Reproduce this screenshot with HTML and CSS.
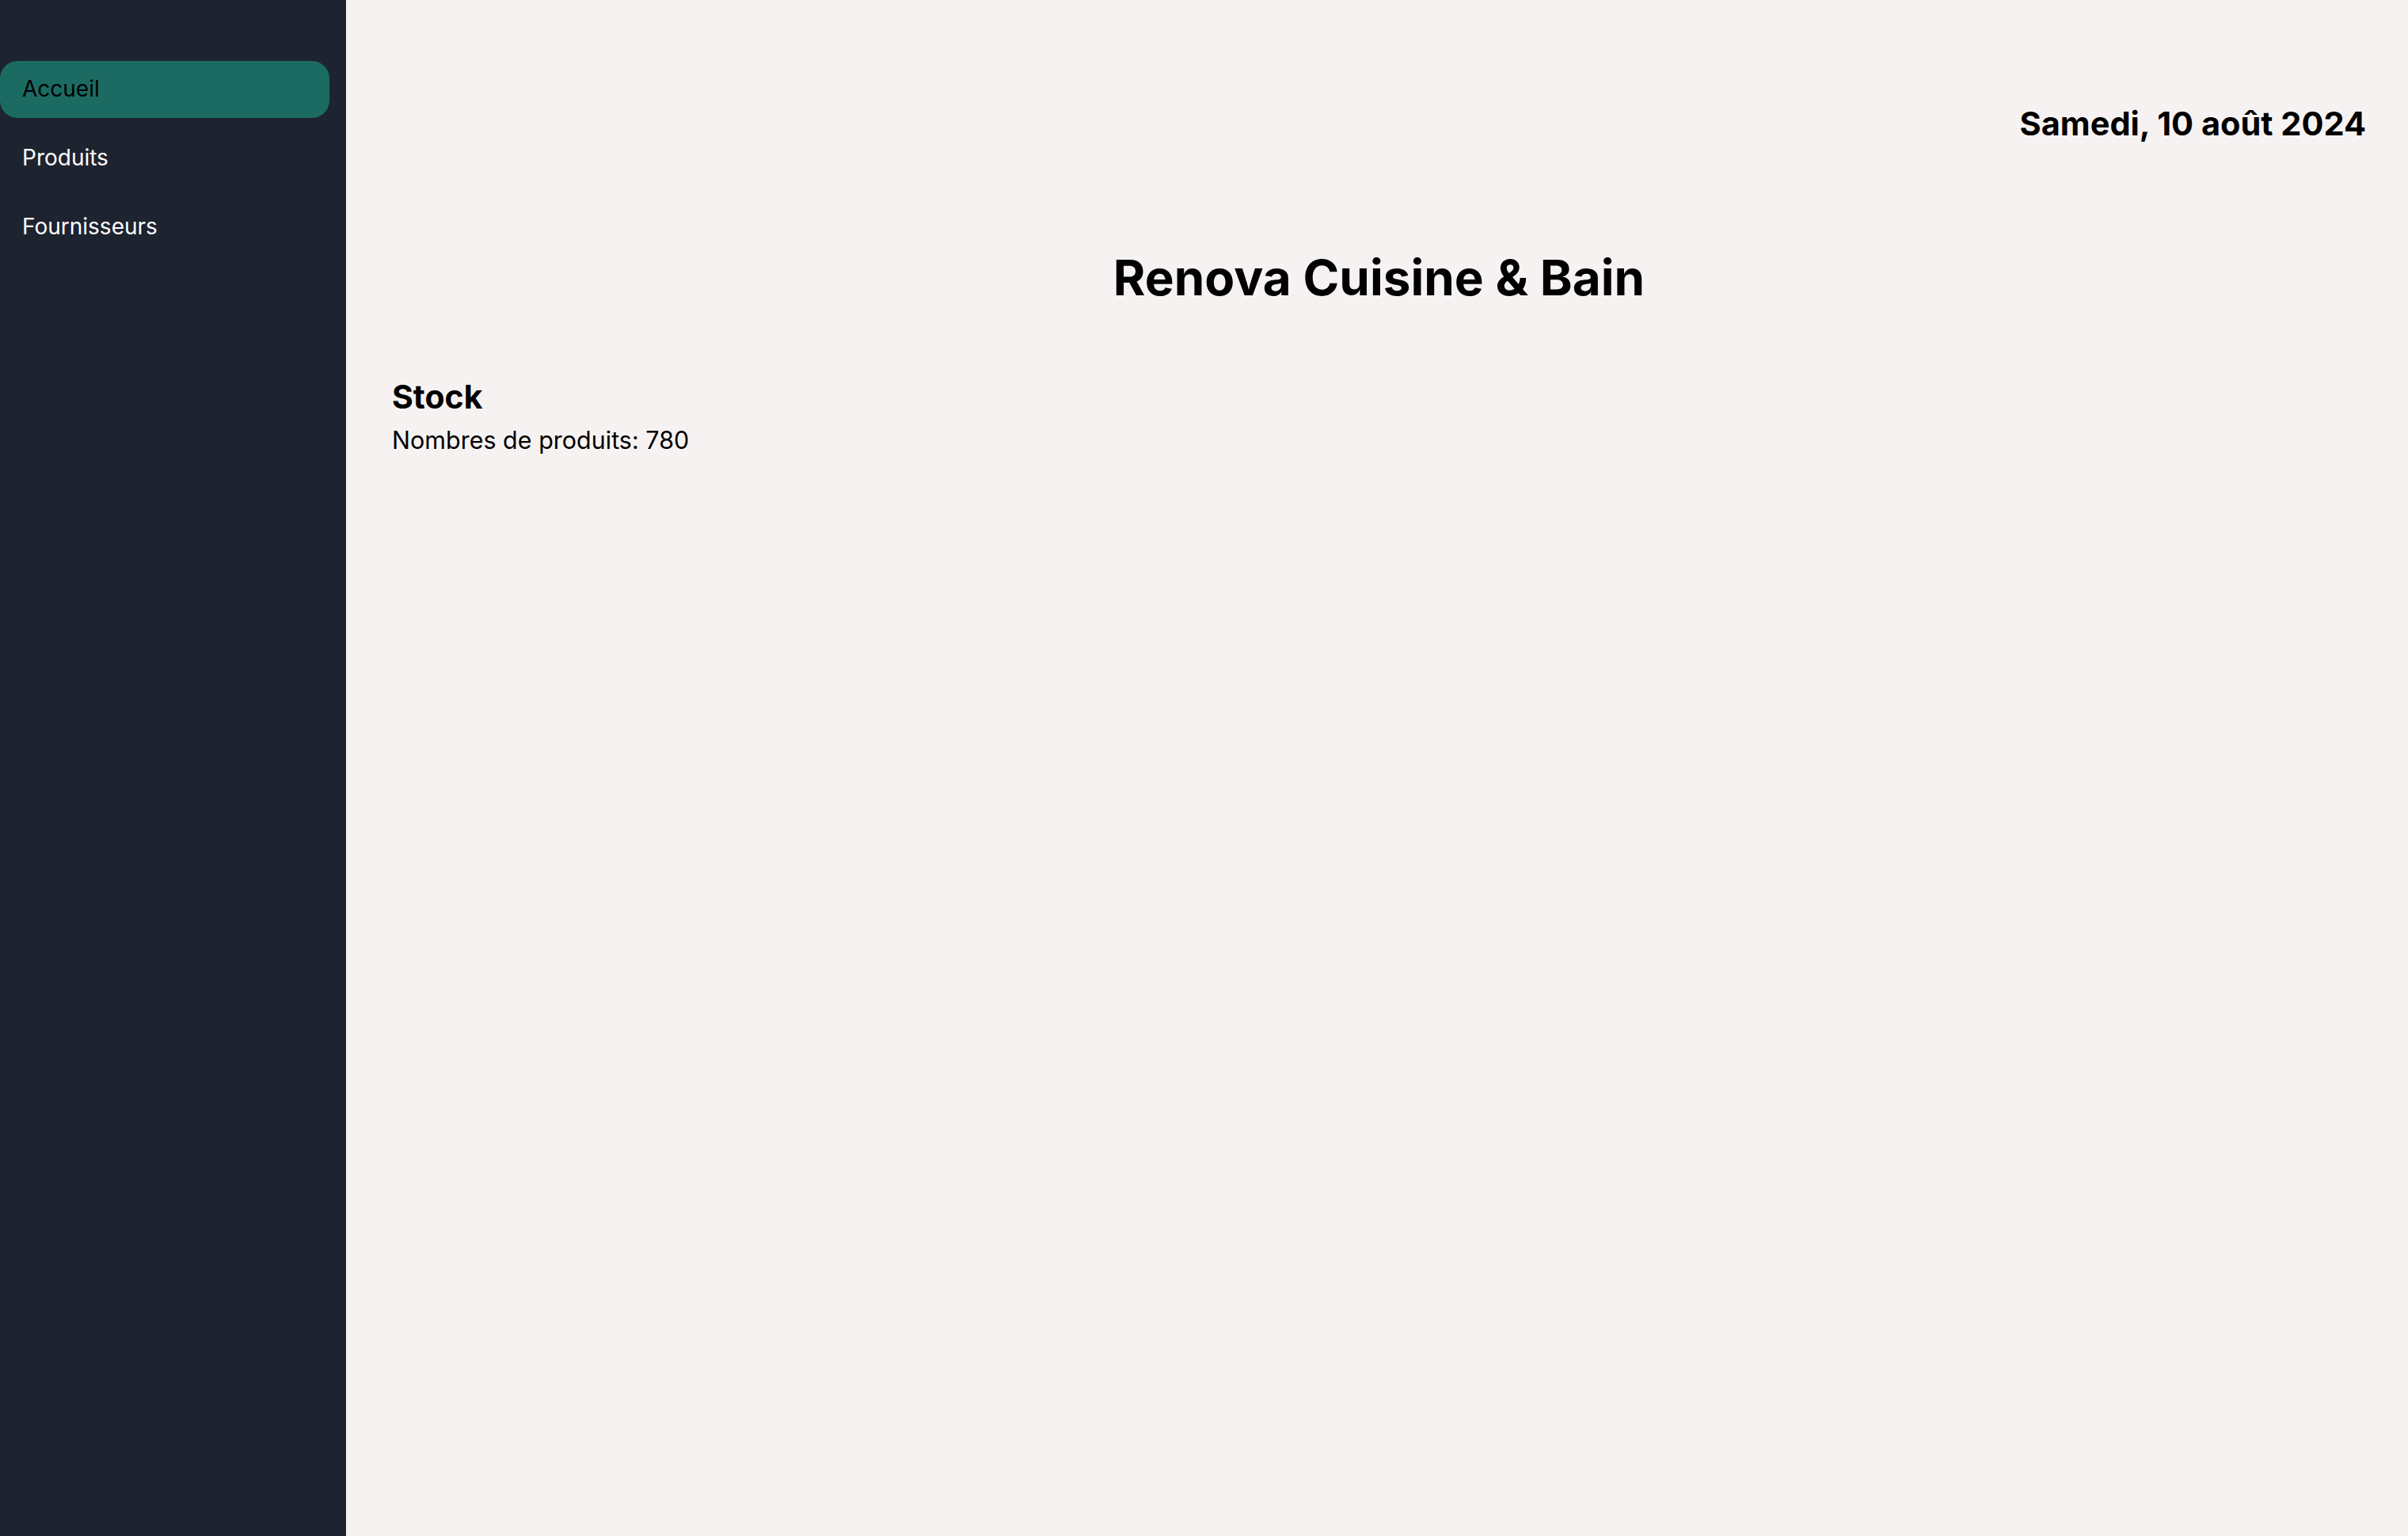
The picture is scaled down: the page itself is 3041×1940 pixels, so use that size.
FILE: index.html
```html
<!DOCTYPE html>
<html lang="fr">
<head>
<meta charset="utf-8">
<title>Renova Cuisine &amp; Bain</title>
<link rel="stylesheet" href="styles.css">
</head>
<body>
<div class="app">
  <aside class="sidebar">
    <nav class="nav">
      <a class="nav-item active" href="#">Accueil</a>
      <a class="nav-item" href="#">Produits</a>
      <a class="nav-item" href="#">Fournisseurs</a>
    </nav>
  </aside>
  <main class="main">
    <div class="date-row">
      <div class="date">Samedi, 10 août 2024</div>
    </div>
    <h1 class="title">Renova Cuisine &amp; Bain</h1>
    <section class="stock">
      <h2 class="stock-title">Stock</h2>
      <p class="stock-count">Nombres de produits: 780</p>
    </section>
  </main>
</div>
</body>
</html>
```
FILE: styles.css
```css
html, body {
  margin: 0;
  padding: 0;
  height: 100%;
}
body {
  font-family: Inter, "Noto Sans", "Liberation Sans", sans-serif;
  color: #000;
  background: #f7f2f2;
}
.app {
  display: flex;
  min-height: 100vh;
}
.sidebar {
  width: 437px;
  flex: 0 0 437px;
  background: #1e2330;
  padding: 77px 21px 0 0;
  box-sizing: border-box;
}
.nav {
  display: flex;
  flex-direction: column;
  gap: 15px;
}
.nav-item {
  display: flex;
  align-items: center;
  height: 72px;
  padding-left: 28px;
  border-radius: 22px;
  font-size: 28px;
  line-height: 1.2;
  color: #ffffff;
  text-decoration: none;
}
.nav-item.active {
  background: #1b6b63;
  color: #000;
}
.main {
  flex: 1;
  background: #f7f2f2;
  padding: 132px 53px 0 58px;
  box-sizing: border-box;
}
.date-row {
  display: flex;
  justify-content: flex-end;
}
.date {
  font-size: 41.5px;
  font-weight: 700;
  line-height: 1.2;
}
.title {
  margin: 132px 0 0;
  text-align: center;
  font-size: 62px;
  font-weight: 700;
  line-height: 1.2;
}
.stock {
  margin-top: 89px;
}
.stock-title {
  margin: 0;
  font-size: 41px;
  font-weight: 700;
  line-height: 1.2;
}
.stock-count {
  margin: 12px 0 0;
  font-size: 30.5px;
  line-height: 1.2;
}
```
